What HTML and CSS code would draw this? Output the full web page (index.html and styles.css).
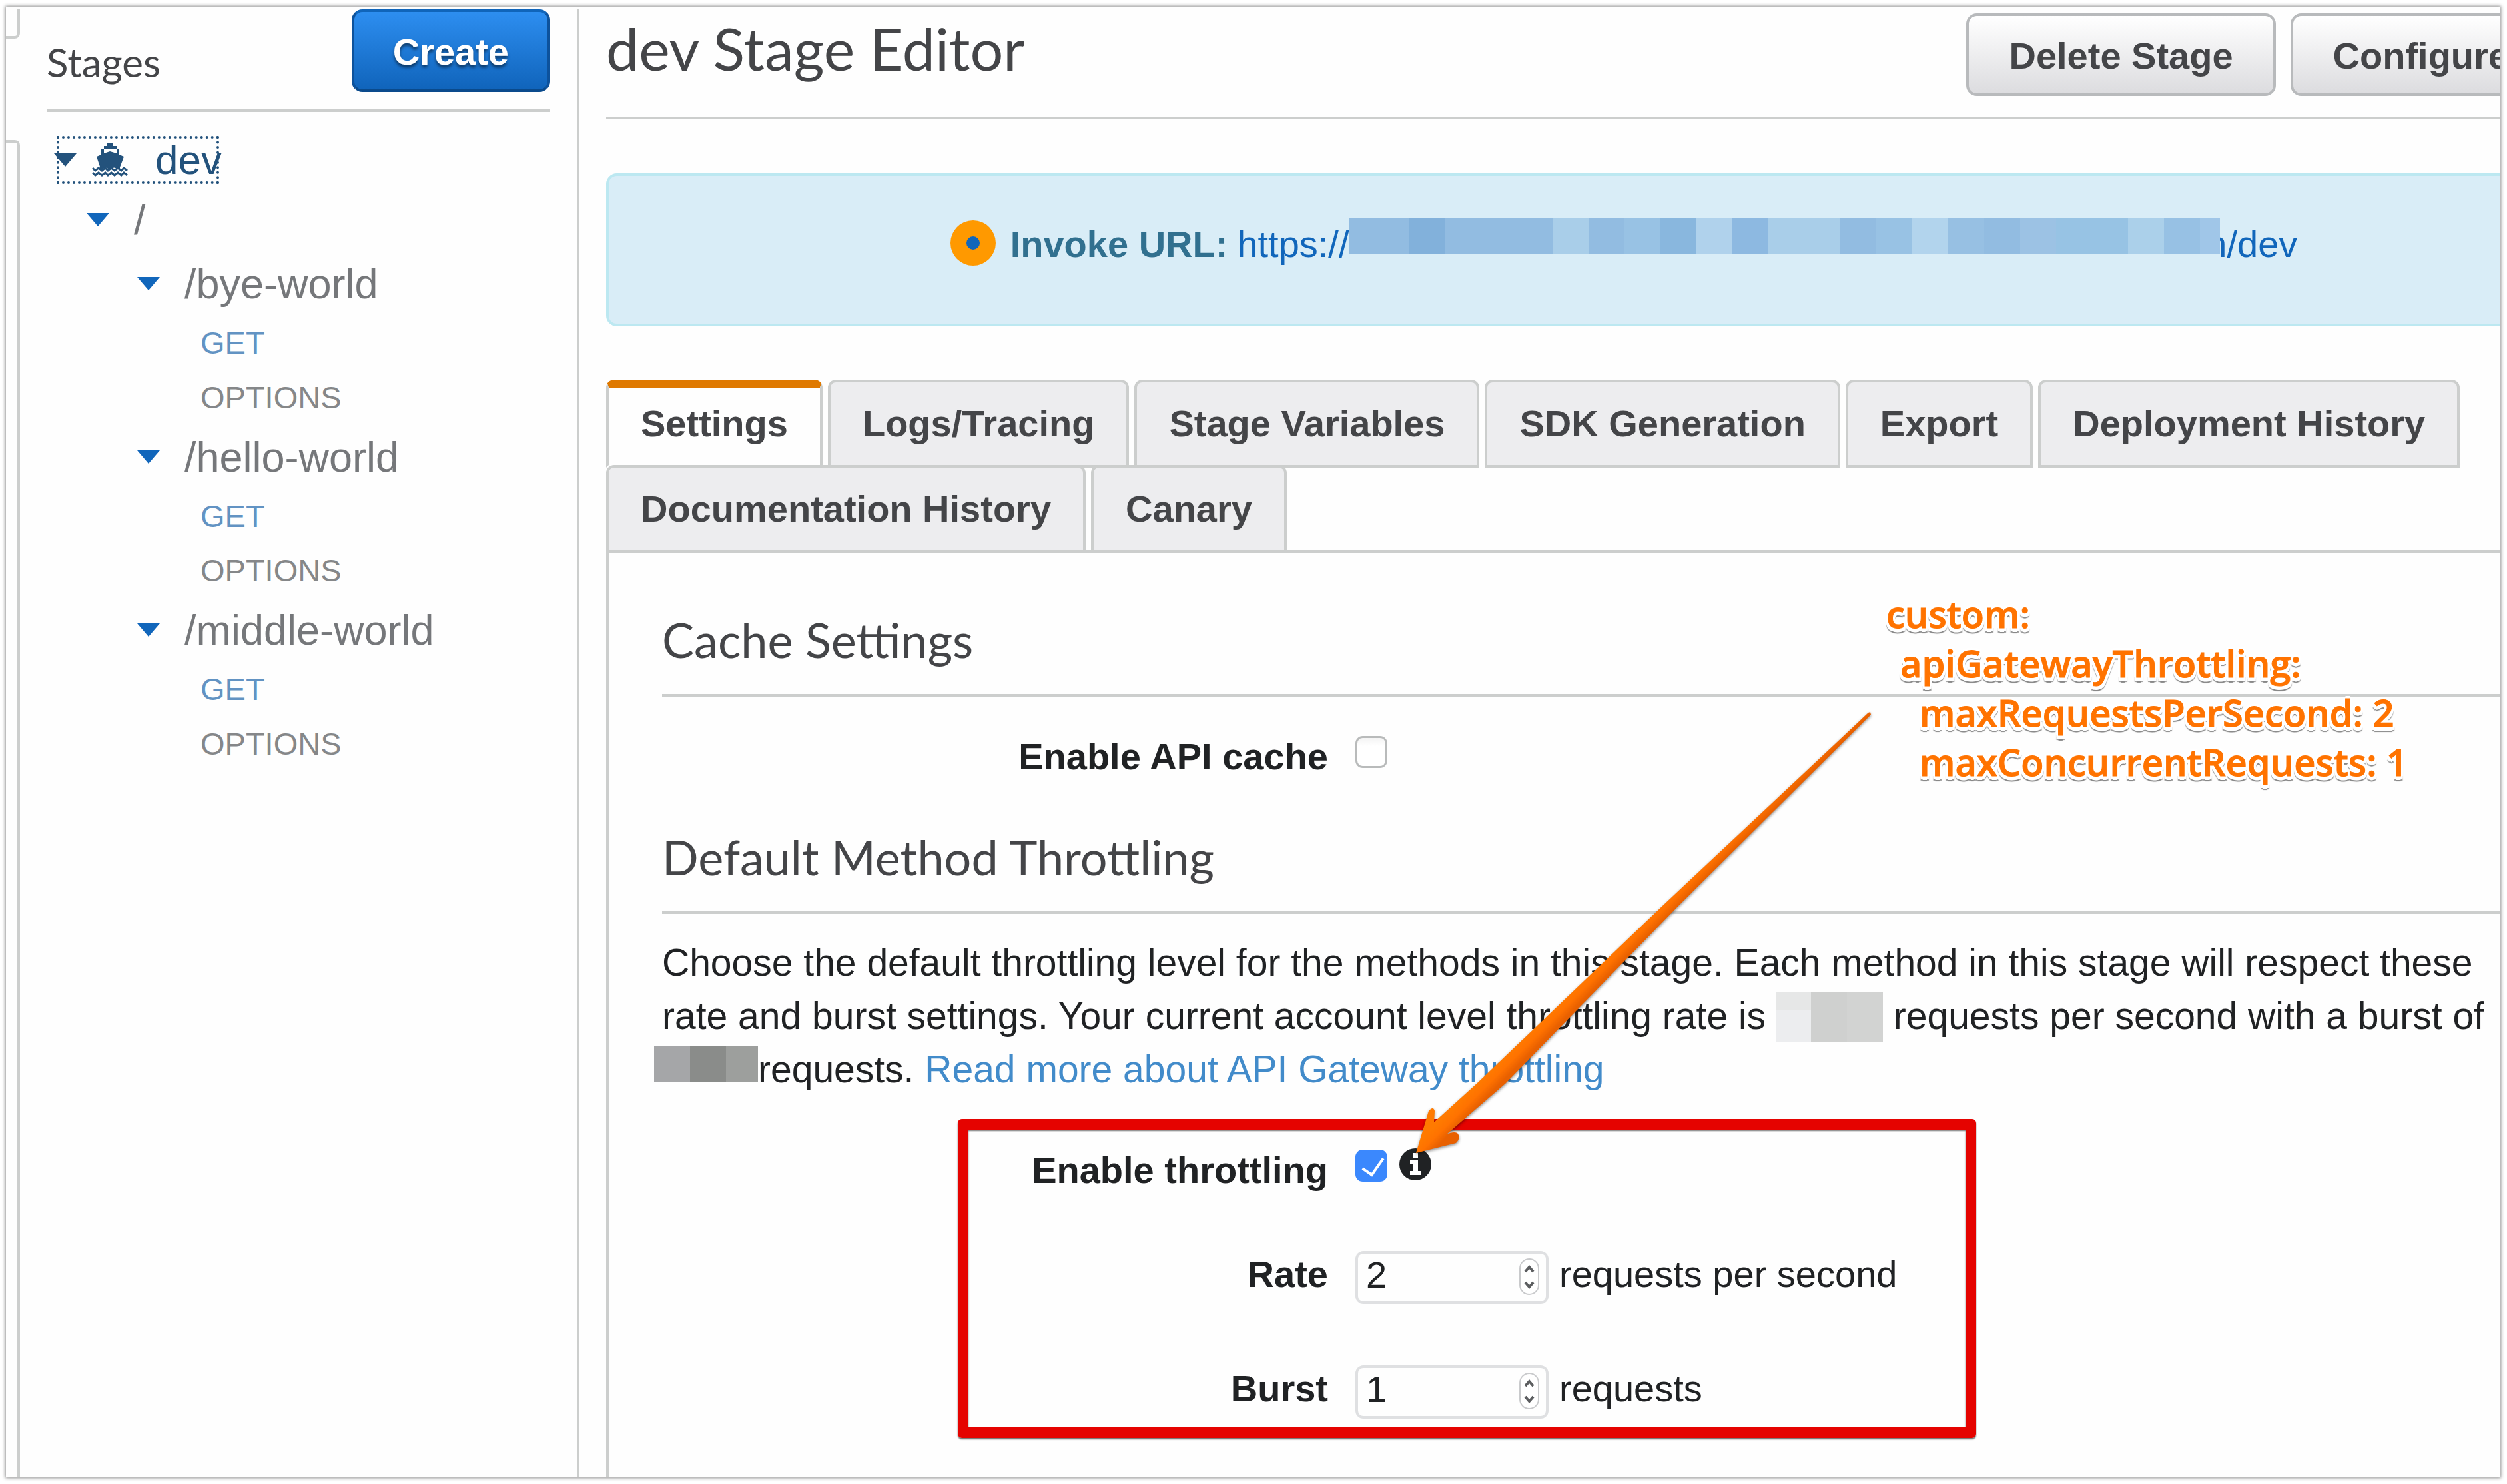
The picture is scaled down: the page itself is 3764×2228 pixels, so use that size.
FILE: index.html
```html
<!DOCTYPE html>
<html lang="en">
<head>
<meta charset="utf-8">
<title>dev Stage Editor</title>
<link rel="stylesheet" href="styles.css">
</head>
<body>
<div class="frame">
  <div class="gutter"><div class="gutter-top"></div><div class="gutter-rest"></div></div>

  <aside class="sidebar">
    <div class="sidebar-head">
      <h2 class="sidebar-title">Stages</h2>
      <button class="btn btn-primary" type="button">Create</button>
    </div>
    <nav class="tree">
      <a class="node node-stage" href="#dev">
        <svg class="caret" viewBox="0 0 34 20"><path d="M0 0H34L17 20Z"/></svg>
        <svg class="ship" viewBox="0 0 54 50"><path d="M23 0h8v4h6v4h4v9l7 3-6 16v3q-3 1-5-1-4-3-7 0-3 3-6 0-4-3-7 0-3 2-5 0v-3L7 20l7-3V8h4V4h5zM18 9v6l9-3 10 3V9h-4V8H22v1z"/><path class="wave" d="M1 37l4 4 5-4 5 4 5-4 4 4 5-4 5 4 5-4 5 4 4-4 5 4M1 44l4 4 5-4 5 4 5-4 4 4 5-4 5 4 5-4 5 4 4-4 5 4"/></svg>
        <span>dev</span>
      </a>
      <a class="node node-root" href="#root"><svg class="caret" viewBox="0 0 34 20"><path d="M0 0H34L17 20Z"/></svg><span>/</span></a>
      <a class="node node-resource" href="#bye"><svg class="caret" viewBox="0 0 34 20"><path d="M0 0H34L17 20Z"/></svg><span>/bye-world</span></a>
      <a class="method method-get" href="#bye-get">GET</a>
      <a class="method" href="#bye-options">OPTIONS</a>
      <a class="node node-resource" href="#hello"><svg class="caret" viewBox="0 0 34 20"><path d="M0 0H34L17 20Z"/></svg><span>/hello-world</span></a>
      <a class="method method-get" href="#hello-get">GET</a>
      <a class="method" href="#hello-options">OPTIONS</a>
      <a class="node node-resource" href="#middle"><svg class="caret" viewBox="0 0 34 20"><path d="M0 0H34L17 20Z"/></svg><span>/middle-world</span></a>
      <a class="method method-get" href="#middle-get">GET</a>
      <a class="method" href="#middle-options">OPTIONS</a>
    </nav>
  </aside>

  <main class="main">
    <header class="main-head">
      <h1 class="title">dev Stage Editor</h1>
      <div class="actions">
        <button class="btn" type="button">Delete Stage</button>
        <button class="btn" type="button">Configure</button>
      </div>
    </header>

    <div class="banner">
      <svg class="beacon" viewBox="0 0 68 68"><circle cx="34" cy="34" r="34" fill="#ff9900"/><circle cx="34" cy="34" r="10" fill="#1166bb"/></svg>
      <strong>Invoke URL:</strong>
      <a class="invoke-link" href="#invoke">https://<span class="mask mask-url"></span><span class="clipped">m</span>/dev</a>
    </div>

    <ul class="tabs">
      <li><a class="tab tab-active" href="#settings">Settings</a></li>
      <li><a class="tab" href="#logs">Logs/Tracing</a></li>
      <li><a class="tab" href="#variables">Stage Variables</a></li>
      <li><a class="tab" href="#sdk">SDK Generation</a></li>
      <li><a class="tab" href="#export">Export</a></li>
      <li><a class="tab" href="#deployments">Deployment History</a></li>
      <li><a class="tab" href="#docs">Documentation History</a></li>
      <li><a class="tab" href="#canary">Canary</a></li>
    </ul>

    <section class="panel">
      <h2 class="section-title">Cache Settings</h2>
      <div class="row row-cache">
        <label class="label" for="cache">Enable API cache</label>
        <input class="check" id="cache" type="checkbox">
      </div>

      <h2 class="section-title">Default Method Throttling</h2>
      <p class="text">Choose the default throttling level for the methods in this stage. Each method in this stage will respect these rate and burst settings. Your current account level throttling rate is <span class="mask mask-rate"></span> requests per second with a burst of <span class="mask mask-burst"></span>requests. <a class="link" href="#more">Read more about API Gateway throttling</a></p>

      <div class="throttle">
        <div class="row">
          <label class="label" for="throttle">Enable throttling</label>
          <div class="field">
            <input class="check" id="throttle" type="checkbox" checked>
            <svg class="info" viewBox="0 0 48 48"><circle cx="24" cy="24" r="24" fill="#202224"/><path fill="#fff" d="M20 7h8v7h-8zM16 18h12v16h4v6H16v-6h4V24h-4z"/></svg>
          </div>
        </div>
        <div class="row">
          <label class="label" for="rate">Rate</label>
          <div class="field">
            <div class="number"><input class="number-input" id="rate" type="number" value="2"><svg class="stepper" viewBox="0 0 32 58"><rect x="2" y="2" width="28" height="53" rx="14"/><path d="M10 21l6-7 6 7M10 37l6 7 6-7"/></svg></div>
            <span>requests per second</span>
          </div>
        </div>
        <div class="row">
          <label class="label" for="burst">Burst</label>
          <div class="field">
            <div class="number"><input class="number-input" id="burst" type="number" value="1"><svg class="stepper" viewBox="0 0 32 58"><rect x="2" y="2" width="28" height="53" rx="14"/><path d="M10 21l6-7 6 7M10 37l6 7 6-7"/></svg></div>
            <span>requests</span>
          </div>
        </div>
        <div class="highlight"></div>
      </div>

      <svg class="arrow" viewBox="0 0 710 690">
        <defs>
          <linearGradient id="shaft" gradientUnits="userSpaceOnUse" x1="345" y1="330" x2="362" y2="347"><stop offset="0" stop-color="#ff7a00"/><stop offset=".5" stop-color="#ff7200"/><stop offset="1" stop-color="#e86000"/></linearGradient>
        </defs>
        <path fill="url(#shaft)" d="M695 10L386 300 107 567 43 625 44 608Q42 600 35 608L16 671 76 656Q84 648 78 641 72 638 62 643L150 567 410 300 699 13 698 9Z"/>
      </svg>
      <div class="note">
        <div>custom:</div>
        <div class="indent-1">apiGatewayThrottling:</div>
        <div class="indent-2">maxRequestsPerSecond: 2</div>
        <div class="indent-2">maxConcurrentRequests: 1</div>
      </div>
    </section>
  </main>
</div>
</body>
</html>
```
FILE: styles.css
```css
* { box-sizing: border-box; }

body {
  margin: 0;
  padding: 10px 10px 10px 9px;
  background: #fff;
  color: #202224;
  font: 56px/80px "Liberation Sans", Arial, sans-serif;
}

a { text-decoration: none; }
h1, h2, p, ul { margin: 0; padding: 0; font-weight: 400; }
ul { list-style: none; }
svg { display: block; flex: none; }

.frame {
  display: flex;
  min-height: calc(100vh - 20px);
  padding-top: 4px;
  overflow: hidden;
  background: #fefefe;
  box-shadow: 0 0 5px 1px rgba(0, 0, 0, .45);
}

/* Edge of the collapsed navigation column */
.gutter { flex: none; display: flex; flex-direction: column; gap: 152px; width: 21px; }
.gutter-top { height: 44px; border: solid #cccecd; border-width: 0 4px 4px 0; border-radius: 0 0 8px 0; }
.gutter-rest { flex: 1; border: solid #cccecd; border-width: 4px 4px 0 0; border-radius: 0 8px 0 0; }

/* Sidebar */
.sidebar { flex: none; width: 840px; padding: 0 40px; border-right: 4px solid #cccecd; }
.sidebar-head {
  display: flex;
  justify-content: space-between;
  align-items: flex-start;
  height: 154px;
  border-bottom: 4px solid #cccecd;
}
.sidebar-title { padding-top: 43px; color: #444548; font: 60px/72px Lato, sans-serif; }

.btn {
  height: 124px;
  padding: 4px 60px 0;
  border: 4px solid #b8babc;
  border-radius: 16px;
  background: linear-gradient(#fff, #dcdcdf);
  color: #444548;
  font: bold 56px/80px "Liberation Sans", Arial, sans-serif;
  white-space: nowrap;
}
.btn-primary {
  padding: 4px 58px 0;
  border-color: #1065ba #0d529c #0a4a8c;
  background: linear-gradient(#2d8ef0, #1064bb);
  color: #fff;
  text-shadow: 0 4px 4px rgba(0, 0, 0, .5);
}

.tree { display: flex; flex-direction: column; align-items: flex-start; padding-top: 36px; }
.node { display: flex; align-items: center; height: 96px; color: #75777a; font-size: 63px; }
.caret { width: 34px; height: 20px; margin-right: 37px; fill: #1166bb; }
.node-stage {
  height: 72px;
  margin: 0 0 6px 15px;
  color: #23527c;
  font-size: 62px;
  outline: 4px dotted #23527c;
  outline-offset: -4px;
}
.node-stage .caret { margin: 0 23px 0 -4px; fill: #23527c; }
.node-stage span { margin-right: -4px; }
.ship { width: 54px; height: 50px; margin-right: 41px; fill: #23527c; }
.wave { fill: none; stroke: #23527c; stroke-width: 3px; }
.node-root { padding-left: 60px; }
.node-resource { padding-left: 136px; }
.method { padding-left: 231px; color: #858789; font-size: 47px; line-height: 82px; }
.method-get { color: #6293c3; }

/* Main column */
.main { flex: 1; min-width: 0; margin-left: 40px; display: flex; flex-direction: column; }
.main-head {
  display: flex;
  justify-content: space-between;
  align-items: flex-start;
  height: 165px;
  padding-top: 4px;
  border-bottom: 4px solid #cccecd;
}
.title { color: #444548; font: 88px/108px Lato, sans-serif; }
.actions { display: flex; gap: 22px; margin: 2px -77px 0 0; }

.banner {
  display: flex;
  align-items: center;
  justify-content: center;
  margin: 81px -212px 0 0;
  padding: 63px 0 79px;
  border: 4px solid #bce8f1;
  border-radius: 16px;
  background: #d9edf7;
  color: #31708f;
}
.beacon { width: 68px; height: 68px; margin: -4px 22px 0 0; }
.invoke-link { margin-left: 14px; color: #1166bb; }

.mask { display: inline-block; }
.mask-url {
  width: 1308px;
  height: 54px;
  vertical-align: 4px;
  background: linear-gradient(90deg,
    #92bce1 90px, #82b1db 90px 144px, #92bce1 144px 306px, #a9cee9 306px 360px,
    #92bce1 360px 414px, #98c2e4 414px 468px, #89b7de 468px 522px, #b0d2ec 522px 576px,
    #8db9e1 576px 630px, #a9cee9 630px 738px, #92bce1 738px 792px, #98c2e4 792px 846px,
    #b2d4ed 846px 900px, #97c0e3 900px 954px, #92bce1 954px 1008px, #9cc2e4 1008px 1062px,
    #97c3e4 1062px 1170px, #abd0ea 1170px 1224px, #97c1e4 1224px 1278px, #a0c6e8 1278px);
}
/* Only the tail of the last masked letter shows */
.clipped { display: inline-flex; justify-content: flex-end; width: 10px; overflow: clip; }
.mask-rate {
  width: 160px;
  height: 76px;
  vertical-align: -20px;
  background:
    linear-gradient(#e6e7e7 28px, #ecedef 28px) 0 0 / 52px 100% no-repeat,
    linear-gradient(90deg, #cfd0cf 106px, #d2d3d2 106px);
}
.mask-burst {
  width: 156px;
  height: 54px;
  margin-left: -12px;
  background: linear-gradient(90deg, #a5a6a8 54px, #8a8c8a 54px 108px, #9d9f9d 108px);
}

.tabs { display: flex; flex-wrap: wrap; column-gap: 8px; margin-top: 80px; }
.tab {
  display: block;
  position: relative;
  height: 132px;
  margin-bottom: -4px;
  padding: 22px 48px;
  border: 4px solid #cccecd;
  border-radius: 12px 12px 0 0;
  background: #ededef;
  color: #444548;
  font-weight: bold;
}
.tab-active {
  padding-top: 14px;
  border-top: 12px solid #df7900;
  border-bottom-color: #fefefe;
  background: #fefefe;
}

.panel {
  position: relative;
  flex: 1;
  padding: 86px 0 60px 80px;
  border: solid #cccecd;
  border-width: 4px 0 0 4px;
}
.section-title {
  padding-bottom: 38px;
  border-bottom: 4px solid #cccecd;
  color: #444548;
  font: 72px/88px Lato, sans-serif;
}
.text { margin-top: 33px; font-size: 57px; }
.link { color: #428bca; }

.row { display: grid; grid-template-columns: 1000px 1fr; column-gap: 41px; align-items: start; height: 80px; }
.row-cache { margin: 50px 0 66px; }
.label { font-weight: bold; text-align: right; line-height: 80px; }
.field { display: flex; gap: 16px; }

.check {
  appearance: none;
  width: 48px;
  height: 48px;
  margin: 9px 0 0;
  border: 3px solid #b9bbbb;
  border-radius: 11px;
  background: linear-gradient(#f4f4f4, #fff 12px);
}
.check:checked { border: 0; background: #3b88fd; }
.check:checked::after {
  content: "";
  display: block;
  width: 15px;
  height: 28px;
  margin: 6px 0 0 17px;
  border: solid #fff;
  border-width: 0 4px 4px 0;
  transform: rotate(35deg);
}
.info { width: 48px; height: 48px; margin: 7px 0 0 2px; }

.throttle { position: relative; display: grid; margin-top: 72px; }
.throttle .row + .row { margin-top: 92px; line-height: 70px; }
.throttle .row:nth-child(2) { margin-top: 81px; }
.throttle .row + .row .label { line-height: 70px; }

.number { position: relative; }
.number-input {
  appearance: textfield;
  display: block;
  width: 290px;
  height: 80px;
  padding: 0 60px 10px 12px;
  border: 4px solid #dfe0e2;
  border-radius: 12px;
  background: #fefefe;
  color: #202224;
  font: 56px/62px "Liberation Sans", Arial, sans-serif;
}
.number-input::-webkit-inner-spin-button { appearance: none; margin: 0; }
.stepper { position: absolute; top: 10px; right: 13px; width: 32px; height: 58px; fill: #fff; stroke: #c9cacc; stroke-width: 2px; }
.stepper path { fill: none; stroke: #5c5e60; stroke-width: 4px; }

/* Annotations drawn over the form */
.highlight {
  position: absolute;
  top: -37px;
  left: 444px;
  width: 1529px;
  height: 479px;
  border: 16px solid #e50300;
  border-radius: 6px;
  box-shadow: 0 2px 2px rgba(0, 0, 0, .55), inset 0 2px 2px rgba(0, 0, 0, .55);
  pointer-events: none;
}
.arrow {
  position: absolute;
  top: 230px;
  left: 1196px;
  width: 710px;
  height: 690px;
  filter: drop-shadow(0 2px 2px rgba(0, 0, 0, .45));
}
.note {
  position: absolute;
  top: 54px;
  left: 1918px;
  color: #ff7300;
  font: 600 56px/74px "Open Sans", sans-serif;
  -webkit-text-stroke: 1px #ff7300;
  white-space: nowrap;
  text-shadow:
    4px 0 #fff, -4px 0 #fff, 0 4px #fff, 0 -4px #fff,
    3px 3px #fff, -3px 3px #fff, 3px -3px #fff, -3px -3px #fff,
    3px 5px #fff, -3px 5px #fff, 0 6px #fff,
    0 8px 1px #888, 3px 7px 1px #999, -3px 7px 1px #999;
}
.indent-1 { padding-left: 21px; }
.indent-2 { padding-left: 50px; }
```
